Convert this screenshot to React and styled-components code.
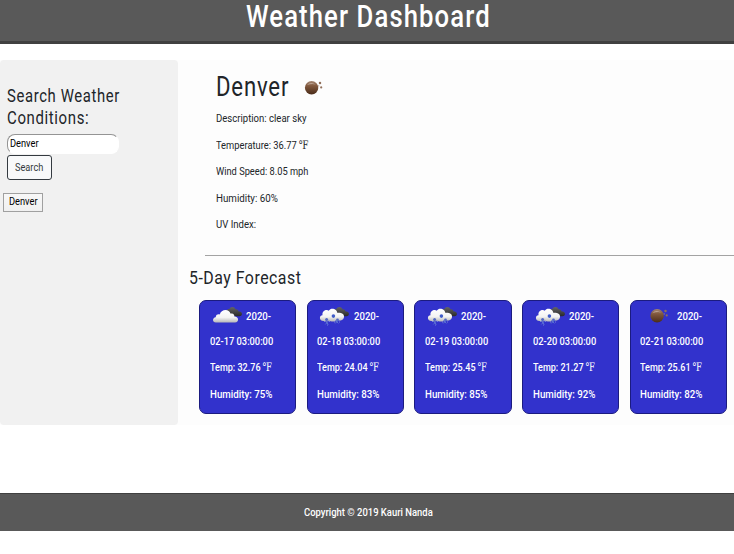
import React, { useLayoutEffect, useRef, useState } from "react";
import styled, { createGlobalStyle } from "styled-components";

const GlobalStyle = createGlobalStyle`
  * { box-sizing: border-box; }
  body { margin: 0; background: #fff; color: #212529; font: 11.5px/20px Roboto, "Liberation Serif", serif; }
  h1, h2, h3, p { margin: 0; font-weight: 400; }
`;

const Measure = styled.span`
  display: inline-block;
  width: ${(p) => p.$w}px;
  white-space: nowrap;
  text-align: left;
  vertical-align: top;
`;
const Condensed = styled.span`
  display: inline-block;
  transform-origin: 0 50%;
`;

/* Condenses a line of text to the given measure. */
function Fit({ w, children }) {
  const ref = useRef(null);
  const [scale, setScale] = useState(1);
  useLayoutEffect(() => {
    setScale(w / ref.current.offsetWidth);
  }, [w, children]);
  return (
    <Measure $w={w}>
      <Condensed ref={ref} style={{ transform: `scaleX(${scale})` }}>{children}</Condensed>
    </Measure>
  );
}

const Unit = styled.span`
  font-family: "Liberation Serif", "DejaVu Serif", serif;
  line-height: 1;
`;

const Page = styled.div`
  height: 554px;
  overflow: hidden;
`;
const Header = styled.header`
  height: 44px;
  background: #595959;
  border-bottom: 3px solid #404040;
  color: #fff;
  padding-left: 2px;
  text-align: center;
`;
const Title = styled.h1`
  font-size: 30.5px;
  line-height: 34px;
  letter-spacing: 1.3px;
  && { font-weight: 500; }
`;
const Main = styled.main`
  display: flex;
  height: 365px;
  margin-top: 16px;
  background: #fdfdfd;
`;
const Sidebar = styled.aside`
  width: 178px;
  flex: none;
  background: #f1f1f1;
  border-radius: 4px;
  padding: 25px 0 0 7px;
`;
const SideTitle = styled.h3`
  display: flex;
  flex-direction: column;
  font-size: 19px;
  line-height: 22px;
  letter-spacing: 0.8px;
`;
const SearchForm = styled.form`
  display: flex;
  flex-direction: column;
  align-items: flex-start;
  gap: 1px;
  margin-top: 5px;
`;
const Field = styled.div`
  width: 112px;
  height: 20px;
  background: #fff;
  color: #000;
  border: 1px solid #fff;
  border-top-color: #949494;
  border-left-color: #949494;
  border-radius: 8px;
  padding-left: 2px;
  line-height: 17px;
`;
const SearchButton = styled.button`
  width: 45px;
  height: 25px;
  padding: 0 1px 2px 0;
  background: #f8f9fa;
  border: 1px solid #343a40;
  border-radius: 3px;
  color: #343a40;
  font: inherit;
  line-height: 20px;
`;
const HistoryButton = styled.button`
  width: 40px;
  height: 19px;
  margin: 12px 0 0 -4px;
  padding: 0 0 2px;
  background: linear-gradient(#f8f8f8, #f0f0f0);
  border: 1px solid #a0a0a0;
  color: #000;
  font: inherit;
  line-height: 15px;
`;
const Content = styled.section`
  flex: 1;
  min-width: 0;
`;
const Current = styled.section`
  height: 196px;
  margin-left: 27px;
  padding: 10px 0 0 10.5px;
  border-bottom: 1px solid #a3a3a3;
`;
const City = styled.h2`
  display: flex;
  align-items: center;
  height: 35px;
  gap: 9px;
  font-size: 27px;
  line-height: 35px;
  letter-spacing: 1px;
`;
const Detail = styled.p`
  height: 26.6px;
  line-height: 26.4px;
`;
const ForecastTitle = styled.h2`
  margin-left: 10.5px;
  height: 44px;
  font-size: 19px;
  line-height: 43px;
  letter-spacing: 0.6px;
`;
const Cards = styled.div`
  display: grid;
  grid-template-columns: repeat(5, 97.2px);
  column-gap: 10.55px;
  margin-left: 21px;
`;
const Card = styled.article`
  height: 114px;
  background: #3232cc;
  border: 1px solid #1b1b80;
  border-radius: 7px;
  color: #fff;
  font-weight: 500;
  padding: 3px 0 0 9.5px;
`;
const DateLine = styled.p`
  display: flex;
  height: 24px;
  gap: 2.5px;
  line-height: 25px;
  && { font-weight: 500; }
`;
const CardLine = styled.p`
  height: 26.3px;
  line-height: 26.3px;
  && { font-weight: 500; }
`;
const IconSvg = styled.svg`
  display: block;
  flex: none;
`;
const Footer = styled.footer`
  height: 38px;
  margin-top: 68px;
  background: #595959;
  border-top: 1px solid #404040;
  color: #fff;
  font-weight: 500;
  text-align: center;
  line-height: 37px;
  padding-left: 2.5px;
`;

function WeatherIcon({ kind, shift = 0 }) {
  if (kind === "clear") {
    return (
      <IconSvg width="34" height="24" viewBox={`${-shift} 0 34 24`}>
        <defs>
          <linearGradient id="moon" x1="0" y1="0" x2="0" y2="1">
            <stop offset="0" stopColor="#a28470" />
            <stop offset=".35" stopColor="#82593e" />
            <stop offset="1" stopColor="#4a2c19" />
          </linearGradient>
        </defs>
        <circle cx="13.6" cy="11.8" r="6.7" fill="url(#moon)" />
        <path d="M8.8 9.2Q12.6 5 17.6 8.4Q13.6 7.3 8.8 9.2Z" fill="#d0bdb0" opacity=".7" />
        <circle cx="22" cy="7" r="1.25" fill="#91705b" />
        <circle cx="23.2" cy="11.4" r="1.1" fill="#91705b" />
        <circle cx="20.7" cy="9.9" r=".6" fill="#a88e7e" />
      </IconSvg>
    );
  }
  return (
    <IconSvg width="34" height="24" viewBox="0 0 34 24">
      <defs>
        <linearGradient id="cloud" x1="0" y1="0" x2="0" y2="1">
          <stop offset="0" stopColor="#fff" />
          <stop offset=".6" stopColor="#f4f4f4" />
          <stop offset="1" stopColor="#b8b8b8" />
        </linearGradient>
        <linearGradient id="dark" x1="0" y1="0" x2="0" y2="1">
          <stop offset="0" stopColor="#666" />
          <stop offset="1" stopColor="#292929" />
        </linearGradient>
      </defs>
      <path d="M17.5 9C15.5 6.5 17.8 4.5 19.3 5C20.3 2.3 24.5 2 25.5 5.3C27.5 4.8 28.5 6.5 28.3 7.2C33 7.2 33 12.2 29.4 12.2H19Z" fill="url(#dark)" />
      {kind === "snow" ? (
        <>
          <path d="M6.5 17C1.5 16.5 2.3 11.2 5.5 11.2C4.8 6.3 10 5.2 11.7 6.8C14 2.7 20.3 5 20.2 8.8C25 8.5 28 10.5 26.8 13.9C25.8 16.5 23 16.6 20.5 16.3C18.5 18 13.5 18 12 16.5C10.5 17.8 8 17.6 6.5 17Z" fill="url(#cloud)" />
          <circle cx="16.4" cy="12.1" r="1.8" fill="#3f5cc8" />
          <circle cx="9.6" cy="15.5" r="1.5" fill="#5067c5" />
          <circle cx="20.5" cy="16" r="1.4" fill="#5067c5" />
          <path d="M8.4 17.2l3 3.2m0-3.2l-3 3.2M18.3 16.2l3 3.2m0-3.2l-3 3.2" stroke="#6079d4" strokeWidth=".9" />
          <path d="M7 17.5h1m4 0h1m-3 3.5h1m6-3h1m4 0h1" stroke="#8493df" strokeWidth=".8" />
        </>
      ) : (
        <path d="M6 18.4C1.8 18.4 2.4 13.4 5.7 13.2C6 10.2 8.5 10 9.8 10.5C10.8 4.8 19.4 4.3 20.4 9.6C23.7 8.7 24.6 11.2 24.4 12.5C29 12.5 29.4 18.4 25 18.4Z" fill="url(#cloud)" />
      )}
    </IconSvg>
  );
}

const days = [
  { icon: "cloud", date: "02-17 03:00:00", temp: "32.76", humidity: 75 },
  { icon: "snow", date: "02-18 03:00:00", temp: "24.04", humidity: 83 },
  { icon: "snow", date: "02-19 03:00:00", temp: "25.45", humidity: 85 },
  { icon: "snow", date: "02-20 03:00:00", temp: "21.27", humidity: 92 },
  { icon: "clear", date: "02-21 03:00:00", temp: "25.61", humidity: 82 },
];
const details = [
  { text: "Description: clear sky", w: 90.5 },
  { text: "Temperature: 36.77 ", unit: "℉", w: 92.5 },
  { text: "Wind Speed: 8.05 mph", w: 92 },
  { text: "Humidity: 60%", w: 62 },
  { text: "UV Index:", w: 40 },
];

export default function App() {
  return (
    <Page>
      <GlobalStyle />
      <Header><Title><Fit w={245}>Weather Dashboard</Fit></Title></Header>
      <Main>
        <Sidebar>
          <SideTitle>
            <Fit w={112.5}>Search Weather</Fit>
            <Fit w={82}>Conditions:</Fit>
          </SideTitle>
          <SearchForm>
            <Field><Fit w={29}>Denver</Fit></Field>
            <SearchButton type="button"><Fit w={28}>Search</Fit></SearchButton>
            <HistoryButton type="button"><Fit w={29}>Denver</Fit></HistoryButton>
          </SearchForm>
        </Sidebar>
        <Content>
          <Current>
            <City><Fit w={73}>Denver</Fit><WeatherIcon kind="clear" /></City>
            {details.map(({ text, unit, w }) => (
              <Detail key={text}><Fit w={w}>{text}{unit && <Unit>{unit}</Unit>}</Fit></Detail>
            ))}
          </Current>
          <ForecastTitle><Fit w={112}>5-Day Forecast</Fit></ForecastTitle>
          <Cards>
            {days.map((d) => (
              <Card key={d.date}>
                <DateLine><WeatherIcon kind={d.icon} shift={3.5} /><Fit w={25}>2020-</Fit></DateLine>
                <CardLine><Fit w={63}>{d.date}</Fit></CardLine>
                <CardLine><Fit w={62}>Temp: {d.temp} <Unit>℉</Unit></Fit></CardLine>
                <CardLine><Fit w={62.5}>Humidity: {d.humidity}%</Fit></CardLine>
              </Card>
            ))}
          </Cards>
        </Content>
      </Main>
      <Footer><Fit w={129}>Copyright © 2019 Kauri Nanda</Fit></Footer>
    </Page>
  );
}
